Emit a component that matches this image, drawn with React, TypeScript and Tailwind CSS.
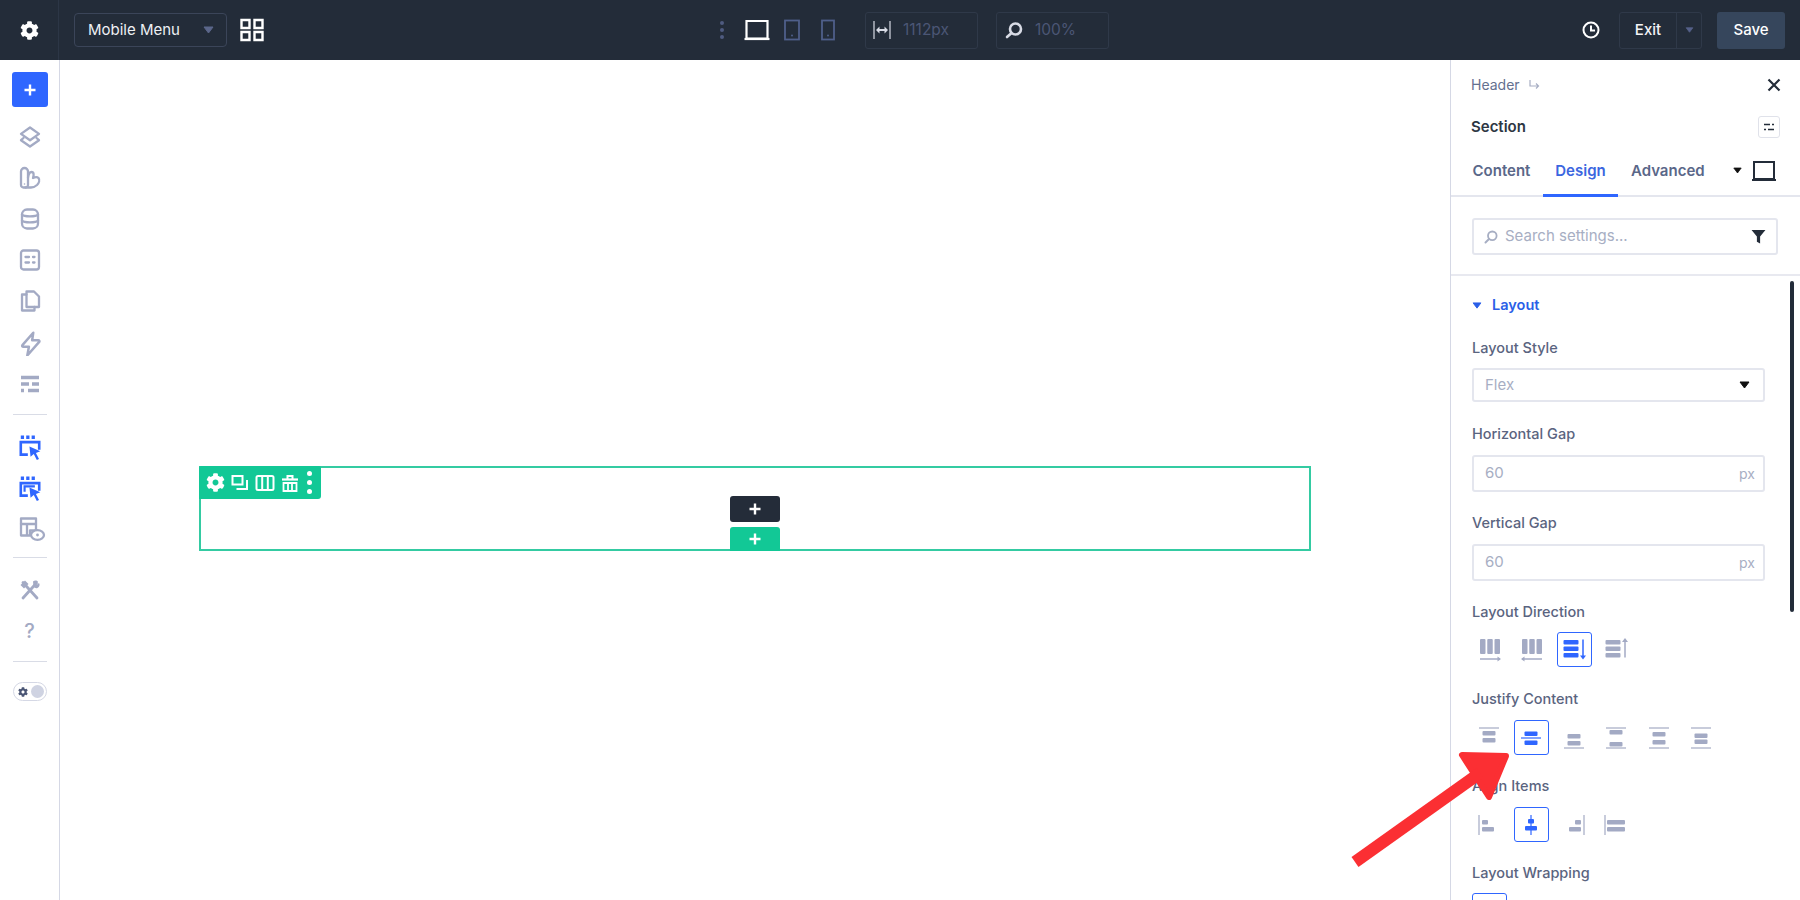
import React from "react";
import { FaCog } from "react-icons/fa";

const S = ({ s = 24, w, h, children, className = "", vb = "0 0 24 24" }: any) => (
  <svg width={w ?? s} height={h ?? s} viewBox={vb} className={"shrink-0 " + className} fill="none">
    {children}
  </svg>
);

const G = "#a3aac4";
const B = "#2f66ff";

const Caret = ({ c = "#5b668a", w = 11, h = 8 }: any) => (
  <svg width={w} height={h} viewBox="0 0 11 8" className="shrink-0">
    <path d="M1 1h9L5.5 7z" fill={c} stroke={c} strokeLinejoin="round" />
  </svg>
);

const SideBtn = ({ children, h = 41 }: any) => <div className="flex w-full items-center justify-center" style={{ height: h }}>{children}</div>;
const Rule = () => <div className="mx-auto h-px w-[34px] bg-[#d9dce6]" />;

const st = { stroke: G, strokeWidth: 2.3, strokeLinejoin: "round" as const, strokeLinecap: "round" as const };

const ClickIcon = ({ inner }: { inner?: boolean }) => (
  <S s={26}>
    <path d="M3.500 3h3M8.500 3h3M13.500 3h3" stroke={B} strokeWidth="3.200" />
    <path d="M10 19H3.500V7.500H20.500v7" stroke={B} strokeWidth="2.400" />
    {inner && <path d="M7 15.500v-5h9.500" stroke={B} strokeWidth="2" />}
    <path d="M11.500 11.500l10 4.500-4 1.500 2.800 5.500-2 1-2.800-5.500-3 2.500z" fill={B} />
  </S>
);

function Sidebar() {
  return (
    <aside className="flex h-full w-[60px] shrink-0 flex-col border-r border-[#d5d8e5] pt-[12px]">
      <div className="mx-auto flex h-[35px] w-[36px] items-center justify-center rounded-[3px] bg-[#2f66ff]">
        <S s={14} vb="0 0 14 14"><path d="M7 1.500v11M1.500 7h11" stroke="#fff" strokeWidth="2.400" /></S>
      </div>
      <div className="h-[9px]" />
      <SideBtn h={41.2}>
        <S>
          <path d="M12 2.500l9 6.400-9 6.400-9-6.400z" {...st} />
          <path d="M5.500 13L3 15.200l9 6.300 9-6.300-2.500-2.200" {...st} />
        </S>
      </SideBtn>
      <SideBtn h={41.2}>
        <S>
          <path d="M3 5.500a3.500 3.500 0 017 0V19a2.500 2.500 0 01-2.500 2.500H5.500A2.500 2.500 0 013 19z" {...st} />
          <path d="M10 11.500c.5-3.500 1.500-5.500 3.500-5.500 2.500 0 2.500 3 1.500 6 2-1 4-1.500 5.500 0 1.500 2 .5 5-1.500 7-2 1.800-4 2.500-6 2.500H7.500" {...st} />
          <circle cx="6.500" cy="18" r=".8" fill={G} />
        </S>
      </SideBtn>
      <SideBtn h={41.2}>
        <S>
          <rect x="4" y="2.500" width="16" height="19" rx="5" {...st} />
          <path d="M4 7.500c2 2.500 14 2.500 16 0M4 13.500c2 2.500 14 2.500 16 0" {...st} />
        </S>
      </SideBtn>
      <SideBtn h={41.2}>
        <S>
          <rect x="3" y="2.500" width="18" height="19" rx="2.500" {...st} />
          <path d="M7.500 9h3.500M15 9h1.500M7.500 14.500H11M15 14.500h1.500" {...st} />
        </S>
      </SideBtn>
      <SideBtn h={41.2}>
        <S>
          <path d="M8.500 2.500h7.500l5 5V18H8.500z" {...st} />
          <path d="M8.500 5.500H4V21.500h12.500V18" {...st} />
        </S>
      </SideBtn>
      <SideBtn h={41.2}>
        <S s={26}>
          <path d="M15 2.500L5 14c-.5.700 0 1.500.8 1.500H11L9.500 23.500 20.500 11c.5-.700 0-1.500-.8-1.500H14z" {...st} />
        </S>
      </SideBtn>
      <SideBtn h={41.2}>
        <S>
          <path d="M3 5.500h18M3 12h8M14 12h7M3 18.500h3M10 18.500h11" stroke={G} strokeWidth="3.600" />
        </S>
      </SideBtn>
      <div className="h-[10px]" />
      <Rule />
      <div className="h-[11px]" />
      <SideBtn><ClickIcon /></SideBtn>
      <SideBtn><ClickIcon inner /></SideBtn>
      <SideBtn h={42}>
        <S s={28} className="ml-[4px]" vb="0 0 28 28">
          <path d="M3 3.500h15v12H12v5H3z" {...st} />
          <path d="M3 9h15M9 9v11" {...st} />
          <ellipse cx="19.500" cy="20" rx="6.500" ry="4.800" fill="#fff" {...st} />
          <circle cx="19.500" cy="20" r="1.400" fill={G} />
        </S>
      </SideBtn>
      <div className="h-[7px]" />
      <Rule />
      <div className="h-[11px]" />
      <SideBtn>
        <S>
          <path d="M5 4.500l14 15.500M18.500 5L5 20" stroke={G} strokeWidth="2.800" strokeLinecap="round" />
          <path d="M2.500 7L7 2.500l3.500 3.500-4.500 4.500zM15 3.500c1.500-1.500 4-1.500 5 .3l-2.500 2.200 1 1 2.500-2c1.200 1.500.5 4-1.500 5-1.500.5-3 0-4-1.500z" fill={G} />
        </S>
      </SideBtn>
      <SideBtn>
        <span className="text-[20px] font-medium leading-none text-[#a3aac4]">?</span>
      </SideBtn>
      <div className="h-[10px]" />
      <Rule />
      <div className="h-[20px]" />
      <div className="mx-auto flex h-[19px] w-[34px] items-center justify-between rounded-full border border-[#d5d8e5] px-[2px]">
        <FaCog className="ml-[2px] text-[10px] text-[#4b5675]" />
        <div className="h-[13px] w-[13px] rounded-full bg-[#cfd3e2]" />
      </div>
    </aside>
  );
}

function Topbar() {
  return (
    <header className="flex h-[60px] shrink-0 items-center bg-[#232c39] text-white">
      <div className="flex h-full w-[59px] shrink-0 items-center justify-center border-r border-[#2c3646]">
        <FaCog className="text-[19px] text-white" />
      </div>
      <div className="ml-[15px] flex h-[34px] w-[153px] items-center justify-between rounded-[4px] border border-[#3b4559] pl-[13px] pr-[12px] text-[15px]">
        <span className="text-[#eef0f4]">Mobile Menu</span>
        <Caret />
      </div>
      <S s={24} className="ml-[13px]" vb="0 0 24 24">
        <path d="M1.500 2h8v8h-8zM14.500 2h8v8h-8zM1.500 14h8v8h-8zM14.500 14h8v8h-8z" stroke="#fff" strokeWidth="2.400" />
      </S>
      <div className="ml-[456px] flex flex-col gap-[3px]">
        <span className="h-[4px] w-[4px] rounded-full bg-[#4f5b80]" />
        <span className="h-[4px] w-[4px] rounded-full bg-[#4f5b80]" />
        <span className="h-[4px] w-[4px] rounded-full bg-[#4f5b80]" />
      </div>
      <S w={26} h={22} vb="0 0 26 22" className="ml-[20px]">
        <path d="M2.500 2h21v17.500h-21z" stroke="#fff" strokeWidth="2.200" />
        <path d="M0.500 20h25" stroke="#fff" strokeWidth="2.200" />
      </S>
      <S w={16} h={22} vb="0 0 16 22" className="ml-[14px]">
        <rect x="1" y="1.500" width="14" height="19" stroke="#4f5f8a" strokeWidth="1.800" />
        <circle cx="8" cy="16.500" r="1" fill="#4f5f8a" />
      </S>
      <S w={14} h={22} vb="0 0 14 22" className="ml-[21px]">
        <rect x="1" y="1.500" width="12" height="19" stroke="#4f5f8a" strokeWidth="1.800" />
        <circle cx="7" cy="16.500" r="1" fill="#4f5f8a" />
      </S>
      <div className="ml-[30px] flex h-[37px] w-[113px] items-center rounded-[3px] border border-[#2f3949] pl-[7px]">
        <S w={18} h={20} vb="0 0 18 20">
          <path d="M1 1v18M17 1v18" stroke="#d8dbe5" strokeWidth="1.200" />
          <path d="M3 10l3.500-3.500v7zM15 10l-3.500-3.500v7z" fill="#d8dbe5" />
          <path d="M6 10h6" stroke="#d8dbe5" strokeWidth="2" />
        </S>
        <span className="ml-[12px] text-[15.500px] text-[#4b5675]">1112px</span>
      </div>
      <div className="ml-[18px] flex h-[37px] w-[113px] items-center rounded-[3px] border border-[#2f3949] pl-[8px]">
        <S s={18} vb="0 0 18 18">
          <circle cx="10.500" cy="8" r="5.500" stroke="#d8dbe5" strokeWidth="2.600" />
          <path d="M6 12.500l-4 3.500" stroke="#d8dbe5" strokeWidth="2.600" strokeLinecap="round" />
        </S>
        <span className="ml-[12px] text-[15.500px] text-[#4b5675]">100%</span>
      </div>
      <div className="ml-auto flex items-center pr-[15px]">
        <S s={18} vb="0 0 18 18">
          <circle cx="9" cy="9" r="7.500" stroke="#fff" strokeWidth="2" />
          <path d="M9 4.500V9.500H13" stroke="#fff" strokeWidth="2" />
        </S>
        <div className="ml-[19px] flex h-[37px] w-[83px] items-center rounded-[3px] border border-[#2f3949]">
          <div className="flex h-full w-[57px] items-center justify-center border-r border-[#2f3949] text-[15px] font-medium text-[#f2f3f6]">Exit</div>
          <div className="flex flex-1 items-center justify-center"><Caret w={9} h={6} c="#55618a" /></div>
        </div>
        <div className="ml-[15px] flex h-[37px] w-[68px] items-center justify-center rounded-[3px] bg-[#36465c] text-[15px] font-medium text-white">Save</div>
      </div>
    </header>
  );
}

const ToolIcon = ({ children, w = 20 }: any) => <S w={w} h={20} vb="0 0 20 20">{children}</S>;

function Canvas() {
  return (
    <main className="min-w-0 flex-1 pt-[406px]">
      <div className="relative mx-auto h-[85px] w-[1112px] border-2 border-[#34cba2]">
        <div className="absolute -left-[2px] -top-[2px] flex h-[33px] w-[122px] items-center gap-[5px] rounded-br-[3px] rounded-tr-[2px] rounded-tl-[2px] bg-[#12c896] pl-[7px]">
          <FaCog className="text-[19px] text-white" />
          <ToolIcon>
            <path d="M2.500 3h10v8.500h-10z" stroke="#fff" strokeWidth="2" />
            <path d="M17 7v9H6.500" stroke="#fff" strokeWidth="2" />
          </ToolIcon>
          <ToolIcon>
            <rect x="1.500" y="3" width="17" height="14" rx="1.500" stroke="#fff" strokeWidth="2" />
            <path d="M7.200 3v14M12.800 3v14" stroke="#fff" strokeWidth="2" />
          </ToolIcon>
          <ToolIcon>
            <path d="M2 6.500h16" stroke="#fff" strokeWidth="2.200" />
            <path d="M7.500 6V3h5v3" stroke="#fff" strokeWidth="2" />
            <path d="M3.500 10h13v8h-13zM8 11v6M12 11v6" stroke="#fff" strokeWidth="1.800" />
          </ToolIcon>
          <div className="ml-[2px] flex flex-col gap-[4px]">
            <span className="h-[5px] w-[5px] rounded-full bg-white" />
            <span className="h-[5px] w-[5px] rounded-full bg-white" />
            <span className="h-[5px] w-[5px] rounded-full bg-white" />
          </div>
        </div>
        <div className="absolute left-1/2 top-[28px] flex h-[26px] w-[50px] -translate-x-1/2 items-center justify-center rounded-[3px] bg-[#242c39]">
          <S s={14} vb="0 0 14 14"><path d="M7 1.500v11M1.500 7h11" stroke="#fff" strokeWidth="2.400" /></S>
        </div>
        <div className="absolute -bottom-[2px] left-1/2 flex h-[24px] w-[50px] -translate-x-1/2 items-center justify-center rounded-t-[3px] bg-[#12c896]">
          <S s={14} vb="0 0 14 14"><path d="M7 1.500v11M1.500 7h11" stroke="#fff" strokeWidth="2.400" /></S>
        </div>
      </div>
    </main>
  );
}

const Label = ({ children, className = "" }: any) => (
  <div className={"flex h-[20px] items-center text-[14.500px] font-medium text-[#5a6480] " + className}>{children}</div>
);

const Field = ({ value, mt }: any) => (
  <div className={"flex h-[37px] w-[293px] items-center justify-between rounded-[3px] border-2 border-[#e4e6ee] pl-[11px] pr-[8px] text-[15px] text-[#a7aec3] " + mt}>
    <span>{value}</span>
    <span className="text-[14px]">px</span>
  </div>
);

const Tool = ({ on, children, w = "w-[35px]" }: any) => (
  <div className={"flex h-[35px] items-center justify-center rounded-[3px] " + w + (on ? " border-[1.500px] border-[#2f66ff]" : "")}>{children}</div>
);

const IconRow = ({ children, className = "" }: any) => (
  <div className={"flex h-[35px] gap-[7.500px] " + className}>{children}</div>
);

function ColArrow({ left }: { left?: boolean }) {
  return (
    <S s={24}>
      <rect x="2" y="1" width="5.500" height="15" rx="1" fill={G} />
      <rect x="9.250" y="1" width="5.500" height="15" rx="1" fill={G} />
      <rect x="16.500" y="1" width="5.500" height="15" rx="1" fill={G} />
      <path d="M2 21h20" stroke={G} strokeWidth="1.500" />
      {left ? <path d="M1 21l3.500-2.500v5z" fill={G} /> : <path d="M23 21l-3.500-2.500v5z" fill={G} />}
    </S>
  );
}

function RowArrow({ up, c }: { up?: boolean; c: string }) {
  return (
    <S s={26} vb="0 0 26 26">
      <rect x="1.500" y="3" width="15" height="4.500" rx="1" fill={c} />
      <rect x="1.500" y="9.500" width="15" height="4.500" rx="1" fill={c} />
      <rect x="1.500" y="16" width="15" height="4.500" rx="1" fill={c} />
      <path d="M21 2.500v18" stroke={c} strokeWidth="1.500" />
      {up ? <path d="M21 1l-3 4h6z" fill={c} /> : <path d="M21 22.500l-3-4h6z" fill={c} />}
    </S>
  );
}

function J({ lines, bars, c = G }: { lines: number[]; bars: number[]; c?: string }) {
  return (
    <S w={22} h={24} vb="0 0 22 24">
      {lines.map((y) => <path key={y} d={`M1 ${y}h20`} stroke={c} strokeWidth="1.200" />)}
      {bars.map((y) => <rect key={y} x="4.500" y={y} width="13" height="4.500" rx="1" fill={c} />)}
    </S>
  );
}

function A({ line, bars, c = G }: { line: number; bars: number[][]; c?: string }) {
  return (
    <S s={24}>
      <path d={`M${line} 2v20`} stroke={c} strokeWidth="1.200" />
      {bars.map(([x, y, w]) => <rect key={y} x={x} y={y} width={w} height="4.500" rx="1" fill={c} />)}
    </S>
  );
}

function Panel() {
  return (
    <aside className="relative h-full w-[350px] shrink-0 overflow-hidden border-l border-[#d5d8e5]">
      <div className="flex h-[50px] items-center justify-between pb-[2px] pl-[20px] pr-[20px] text-[14px] text-[#64708f]">
        <div className="flex items-center gap-[9px]">
          <span>Header</span>
          <S s={11} vb="0 0 11 11"><path d="M1 1v6h8M7 4.500l2.500 2.500-2.500 2.500" stroke="#a7aec3" strokeWidth="1.200" /></S>
        </div>
        <S s={14} vb="0 0 14 14" className="mr-[-1px] mt-[2px]"><path d="M1.500 1.500l11 11M12.500 1.500l-11 11" stroke="#232c39" strokeWidth="2.200" /></S>
      </div>
      <div className="flex h-[34px] items-center justify-between pl-[20px] pr-[20px]">
        <span className="text-[15px] font-semibold text-[#2d3643]">Section</span>
        <div className="flex h-[22px] w-[22px] items-center justify-center rounded-[3px] border border-[#e0e2ea]">
          <S s={12} vb="0 0 12 12"><path d="M1 3.500h6M9 3.500h2M1 8.500h2M5 8.500h6" stroke="#232c39" strokeWidth="1.600" /></S>
        </div>
      </div>
      <div className="flex h-[53px] border-b-2 border-[#e4e6ee] pl-[9px] pr-[24px] text-[15px] font-semibold">
        <div className="flex h-[51px] w-[83px] items-center justify-center pt-[3px] text-[#5a6789]">Content</div>
        <div className="-mb-[2px] flex h-[53px] w-[75px] items-center justify-center border-b-[3px] border-[#2f66ff] pt-[5px] text-[#3b66e0]">Design</div>
        <div className="ml-[13px] flex h-[51px] items-center pt-[3px] text-[#5a6789]">Advanced</div>
        <div className="ml-auto flex h-[51px] items-center gap-[10px] pt-[2px]">
          <Caret c="#111" w={9} h={7} />
          <S w={24} h={20} vb="0 0 24 20">
            <path d="M2 1h20v17H2z" stroke="#232c39" strokeWidth="2" />
            <path d="M0 19h24" stroke="#232c39" strokeWidth="2" />
          </S>
        </div>
      </div>
      <div className="flex h-[79px] items-center border-b-2 border-[#e8e9f0] px-[21px] pt-[2px]">
        <div className="flex h-[37px] w-[306px] items-center rounded-[3px] border-2 border-[#e4e6ee] pl-[10px] pr-[10px]">
          <S s={14} vb="0 0 14 14">
            <circle cx="8.300" cy="5.800" r="4.300" stroke="#a7aec3" strokeWidth="1.800" />
            <path d="M5 9l-3.500 3.500" stroke="#a7aec3" strokeWidth="2" strokeLinecap="round" />
          </S>
          <span className="ml-[7px] text-[15px] text-[#a7aec3]">Search settings...</span>
          <S s={15} className="ml-auto" vb="0 0 14 14"><path d="M0.500 1h13L8.500 7v6.500L5.500 12V7z" fill="#232c39" /></S>
        </div>
      </div>
      <div className="pl-[21px]">
        <div className="mt-[19px] flex h-[20px] items-center gap-[10px] text-[14.500px] font-semibold text-[#2a5fe8]">
          <Caret c="#2a5fe8" w={10} h={7} />
          <span>Layout</span>
        </div>
        <Label className="mt-[23px]">Layout Style</Label>
        <div className="mt-[10px] flex h-[34px] w-[293px] items-center justify-between rounded-[3px] border-2 border-[#e4e6ee] pl-[11px] pr-[13px] text-[15px] text-[#a7aec3]">
          <span>Flex</span>
          <Caret c="#111" w={11} h={8} />
        </div>
        <Label className="mt-[22px]">Horizontal Gap</Label>
        <Field value="60" mt="mt-[11px]" />
        <Label className="mt-[21px]">Vertical Gap</Label>
        <Field value="60" mt="mt-[11px]" />
        <Label className="mt-[21px]">Layout Direction</Label>
        <IconRow className="mt-[10px]">
          <Tool><ColArrow /></Tool>
          <Tool><ColArrow left /></Tool>
          <Tool on><RowArrow c={B} /></Tool>
          <Tool><RowArrow up c={G} /></Tool>
        </IconRow>
        <Label className="mt-[22px]">Justify Content</Label>
        <IconRow className="mt-[11px] -ml-[1px]">
          <Tool><J lines={[2]} bars={[5, 12]} /></Tool>
          <Tool on><J lines={[12]} bars={[5.500, 14.500]} c={B} /></Tool>
          <Tool><J lines={[22]} bars={[8, 15]} /></Tool>
          <Tool><J lines={[2, 22]} bars={[4, 16]} /></Tool>
          <Tool><J lines={[2, 22]} bars={[6, 14]} /></Tool>
          <Tool><J lines={[2, 22]} bars={[7.500, 13.500]} /></Tool>
        </IconRow>
        <Label className="mt-[21px]">Align Items</Label>
        <IconRow className="mt-[11px] -ml-[1px]">
          <Tool><A line={2} bars={[[5, 7, 6], [5, 14, 12]]} /></Tool>
          <Tool on>
            <A line={12} c={B} bars={[[9, 6, 6], [6, 13, 12]]} />
          </Tool>
          <Tool><A line={22} bars={[[13, 7, 6], [7, 14, 12]]} /></Tool>
          <Tool><A line={1} bars={[[3, 7, 18], [3, 14, 18]]} /></Tool>
        </IconRow>
        <Label className="mt-[21px]">Layout Wrapping</Label>
        <IconRow className="mt-[10px]">
          <Tool on />
          <Tool><S s={24}><path d="M2 2h20" stroke={G} strokeWidth="1.200" /></S></Tool>
          <Tool><S s={24}><path d="M2 2h20" stroke={G} strokeWidth="1.200" /></S></Tool>
        </IconRow>
      </div>
      <div className="absolute left-[339px] top-[221px] h-[331px] w-[4px] rounded-full bg-[#232c39]" />
    </aside>
  );
}

export default function App() {
  return (
    <div className="relative flex h-[900px] w-[1800px] flex-col overflow-hidden bg-white font-['Inter',sans-serif]">
      <Topbar />
      <div className="flex min-h-0 flex-1">
        <Sidebar />
        <Canvas />
        <Panel />
      </div>
      <svg className="absolute left-[1340px] top-[740px]" width="180" height="140" viewBox="0 0 180 140">
        <path d="M122 15l44 1-17 41z" fill="#fb2f33" stroke="#fb2f33" strokeWidth="6" strokeLinejoin="round" />
        <path d="M15 122L140 33" stroke="#fb2f33" strokeWidth="12" />
      </svg>
    </div>
  );
}
